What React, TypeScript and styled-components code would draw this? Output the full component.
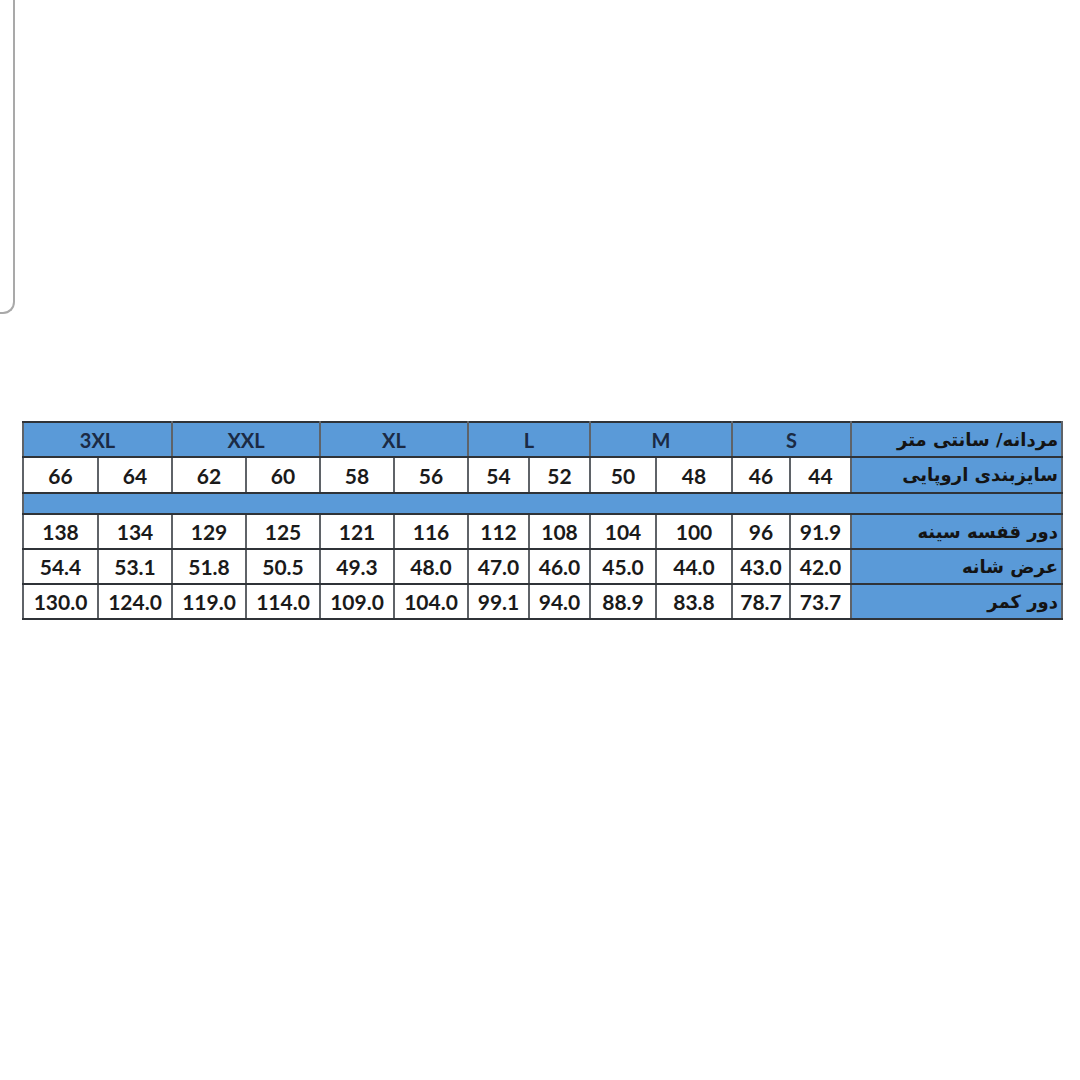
import React from 'react';
import styled, { createGlobalStyle } from 'styled-components';

const GlobalStyle = createGlobalStyle`
  html, body {
    margin: 0;
    padding: 0;
    background: #ffffff;
  }
  body {
    width: 1080px;
    height: 1080px;
    overflow: hidden;
  }
`;

const Page = styled.div`
  display: flex;
  flex-direction: column;
  align-items: flex-start;
`;

const CardEdge = styled.div`
  width: 13px;
  height: 312px;
  border-right: 2px solid #a9a9a9;
  border-bottom: 2px solid #a9a9a9;
  border-bottom-right-radius: 12px;
`;

const Table = styled.table`
  margin: 107px 0 0 22px;
  width: 1039px;
  border-collapse: collapse;
  table-layout: fixed;
  border: 2px solid #2f3338;
`;

const Col = styled.col<{ $w: number }>`
  width: ${(p) => p.$w}px;
`;

const Row = styled.tr<{ $h: number }>`
  height: ${(p) => p.$h}px;
`;

const Cell = styled.td<{ $blue?: boolean }>`
  padding: 0;
  background: ${(p) => (p.$blue ? '#5a9ad8' : '#ffffff')};
  border-top: 2px solid #2f3338;
  border-bottom: 2px solid #2f3338;
  border-left: 2px solid #5f6368;
  border-right: 2px solid #5f6368;
  text-align: center;
  vertical-align: middle;
  font-family: Lato, 'Open Sans', sans-serif;
  font-weight: 700;
  font-size: 21px;
  color: #1a1a1a;
  white-space: nowrap;
  overflow: hidden;
  line-height: 1;
`;

const SizeHead = styled(Cell)`
  color: #1b2a44;
  font-size: 20px;
`;

const Label = styled(Cell)`
  direction: rtl;
  text-align: right;
  padding-right: 3px;
  font-family: 'DejaVu Sans', 'Noto Sans', sans-serif;
  font-size: 18px;
  color: #141414;
  border-left: 2px solid #2f3338;
`;

const Spacer = styled(Cell)`
  background: #5a9ad8;
`;

const widths = [75, 74, 74, 74, 74, 74, 61, 61, 66, 76, 58, 61, 211];
const sizes = ['3XL', 'XXL', 'XL', 'L', 'M', 'S'];
const euro = ['66', '64', '62', '60', '58', '56', '54', '52', '50', '48', '46', '44'];

const measures: { label: string; values: string[] }[] = [
  {
    label: 'دور قفسه سینه',
    values: ['138', '134', '129', '125', '121', '116', '112', '108', '104', '100', '96', '91.9'],
  },
  {
    label: 'عرض شانه',
    values: ['54.4', '53.1', '51.8', '50.5', '49.3', '48.0', '47.0', '46.0', '45.0', '44.0', '43.0', '42.0'],
  },
  {
    label: 'دور کمر',
    values: ['130.0', '124.0', '119.0', '114.0', '109.0', '104.0', '99.1', '94.0', '88.9', '83.8', '78.7', '73.7'],
  },
];

export default function App() {
  return (
    <Page>
      <GlobalStyle />
      <CardEdge />
      <Table>
        <colgroup>
          {widths.map((w, i) => (
            <Col key={i} $w={w} />
          ))}
        </colgroup>
        <tbody>
          <Row $h={35}>
            {sizes.map((s) => (
              <SizeHead key={s} colSpan={2} $blue>
                {s}
              </SizeHead>
            ))}
            <Label $blue>مردانه/ سانتی متر</Label>
          </Row>
          <Row $h={36}>
            {euro.map((v) => (
              <Cell key={v}>{v}</Cell>
            ))}
            <Label $blue>سایزبندی اروپایی</Label>
          </Row>
          <Row $h={21}>
            <Spacer colSpan={13} />
          </Row>
          {measures.map((m) => (
            <Row key={m.label} $h={35}>
              {m.values.map((v, i) => (
                <Cell key={i}>{v}</Cell>
              ))}
              <Label $blue>{m.label}</Label>
            </Row>
          ))}
        </tbody>
      </Table>
    </Page>
  );
}
